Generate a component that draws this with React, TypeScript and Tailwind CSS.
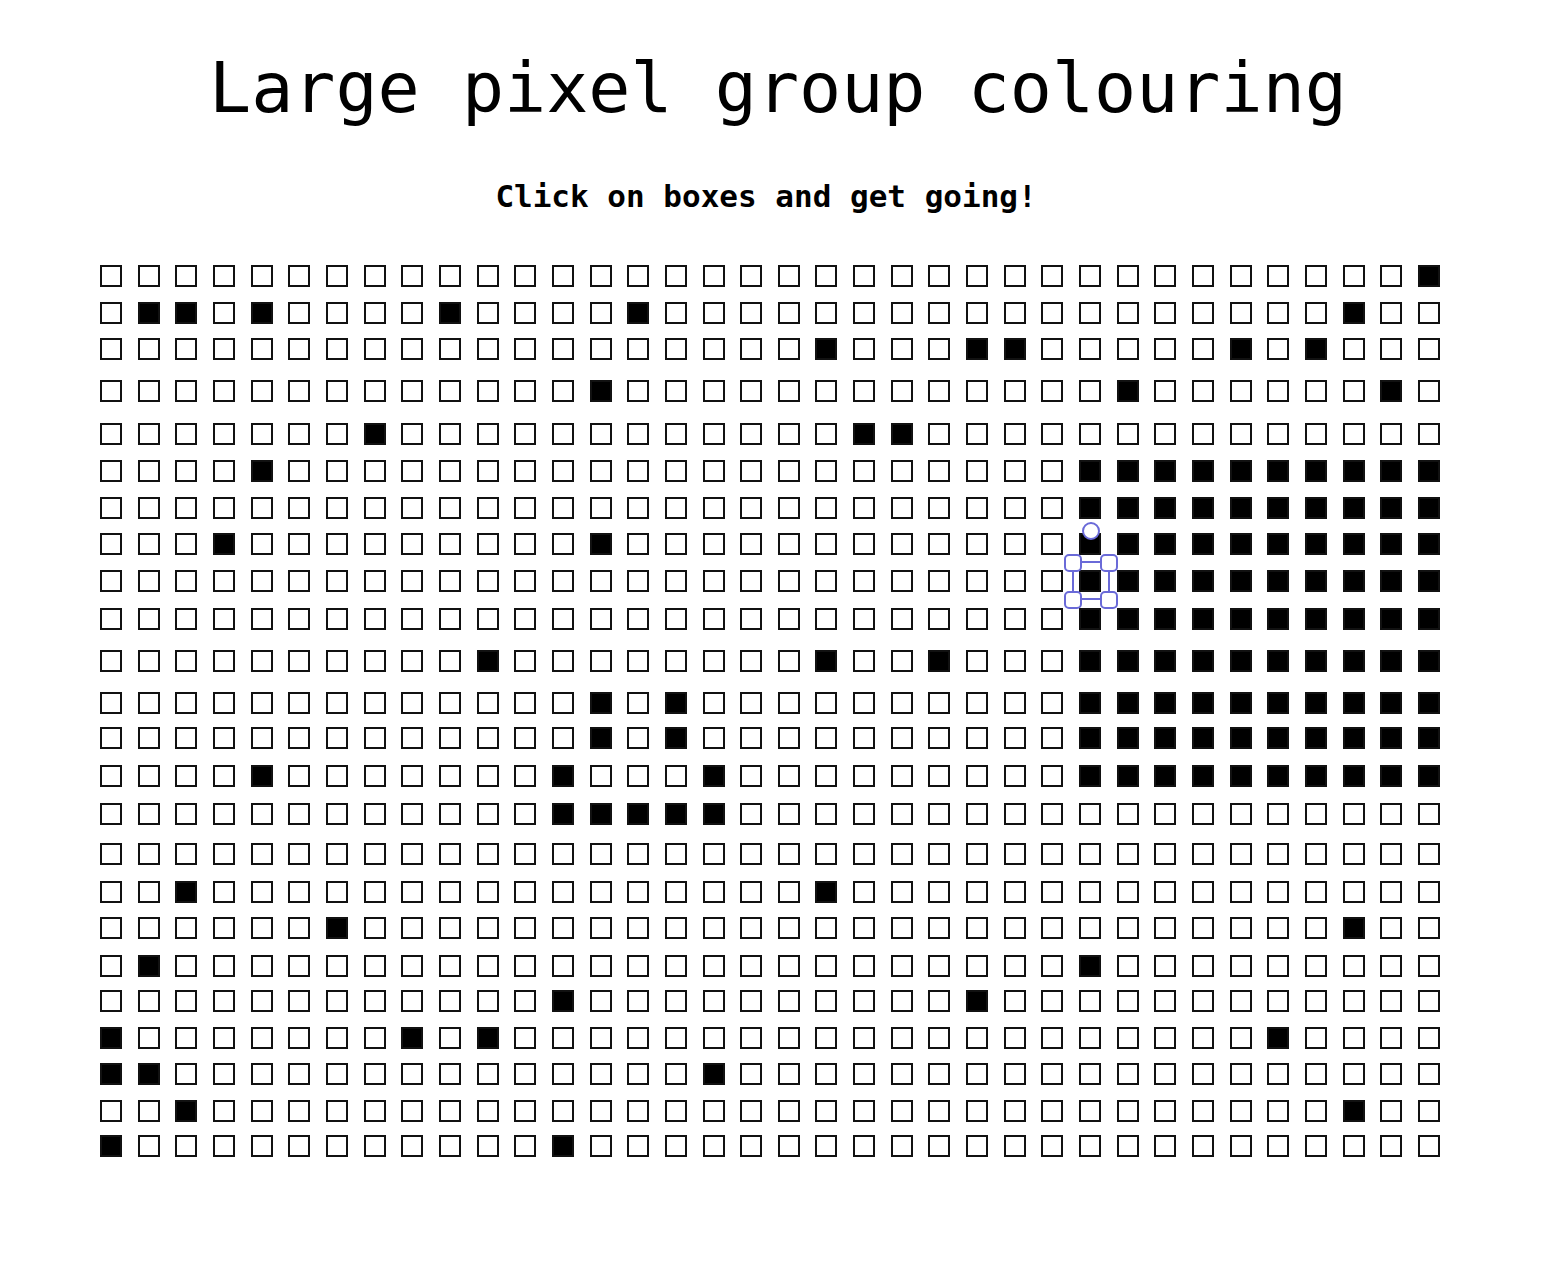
import React from "react";

const COLS = 36;

// filled cells per row (column indexes)
const block = [26, 27, 28, 29, 30, 31, 32, 33, 34, 35];
const filledRows: number[][] = [
  [35],
  [1, 2, 4, 9, 14, 33],
  [19, 23, 24, 30, 32],
  [13, 27, 34],
  [7, 20, 21],
  [4, ...block],
  [...block],
  [3, 13, ...block],
  [...block],
  [...block],
  [10, 19, 22, ...block],
  [13, 15, ...block],
  [13, 15, ...block],
  [4, 12, 16, ...block],
  [12, 13, 14, 15, 16],
  [],
  [2, 19],
  [6, 33],
  [1, 26],
  [12, 23],
  [0, 8, 10, 31],
  [0, 1, 16],
  [2, 33],
  [0, 12],
];

// spacing above each row, written out so tailwind picks them up
const rowGaps = [
  "mt-0",
  "mt-[15px]",
  "mt-[14px]",
  "mt-[20px]",
  "mt-[21px]",
  "mt-[15px]",
  "mt-[15px]",
  "mt-[14px]",
  "mt-[15px]",
  "mt-[16px]",
  "mt-[20px]",
  "mt-[20px]",
  "mt-[13px]",
  "mt-[16px]",
  "mt-[16px]",
  "mt-[18px]",
  "mt-[16px]",
  "mt-[14px]",
  "mt-[16px]",
  "mt-[13px]",
  "mt-[15px]",
  "mt-[14px]",
  "mt-[15px]",
  "mt-[13px]",
];

function Box({ on, onClick }: { on: boolean; onClick: () => void }) {
  return (
    <button
      type="button"
      onClick={onClick}
      className={
        on
          ? "h-[22px] w-[22px] border-2 border-[#111] bg-black"
          : "h-[22px] w-[22px] border-2 border-[#111] bg-white"
      }
    />
  );
}

function SelectionHandles() {
  const c = "#6a6ad8";
  return (
    <svg
      className="pointer-events-none absolute left-[962px] top-[256px]"
      width="57"
      height="89"
      viewBox="0 0 57 89"
      fill="none"
    >
      <line x1="19" y1="41" x2="38" y2="41" stroke={c} strokeWidth="2" />
      <line x1="19" y1="78" x2="38" y2="78" stroke={c} strokeWidth="2" />
      <line x1="11" y1="51" x2="11" y2="70" stroke={c} strokeWidth="2" />
      <line x1="47" y1="51" x2="47" y2="70" stroke={c} strokeWidth="2" />
      <circle cx="29" cy="10" r="8" fill="white" stroke={c} strokeWidth="2" />
      <rect x="3" y="34" width="16" height="16" rx="4" fill="white" stroke={c} strokeWidth="2" />
      <rect x="39" y="34" width="16" height="16" rx="4" fill="white" stroke={c} strokeWidth="2" />
      <rect x="3" y="71" width="16" height="16" rx="4" fill="white" stroke={c} strokeWidth="2" />
      <rect x="39" y="71" width="16" height="16" rx="4" fill="white" stroke={c} strokeWidth="2" />
    </svg>
  );
}

export default function App() {
  const [grid, setGrid] = React.useState<boolean[][]>(() =>
    filledRows.map((cols) =>
      Array.from({ length: COLS }, (_, i) => cols.includes(i)),
    ),
  );

  function toggle(r: number, c: number) {
    setGrid((g) =>
      g.map((row, ri) =>
        ri === r ? row.map((v, ci) => (ci === c ? !v : v)) : row,
      ),
    );
  }

  return (
    <div className="min-h-screen bg-white font-['DejaVu_Sans_Mono',monospace] text-black">
      <h1 className="pt-[53px] pl-[12px] text-center text-[70px] leading-[70px] font-normal">
        Large pixel group colouring
      </h1>
      <p className="mt-[58px] pr-[12px] text-center text-[31px] leading-[31px] font-bold">
        Click on boxes and get going!
      </p>

      <div className="relative ml-[100px] mt-[53px] w-[1340px]">
        {grid.map((row, r) => (
          <div key={r} className={`flex justify-between ${rowGaps[r]}`}>
            {row.map((on, c) => (
              <Box key={c} on={on} onClick={() => toggle(r, c)} />
            ))}
          </div>
        ))}
        <SelectionHandles />
      </div>
    </div>
  );
}
